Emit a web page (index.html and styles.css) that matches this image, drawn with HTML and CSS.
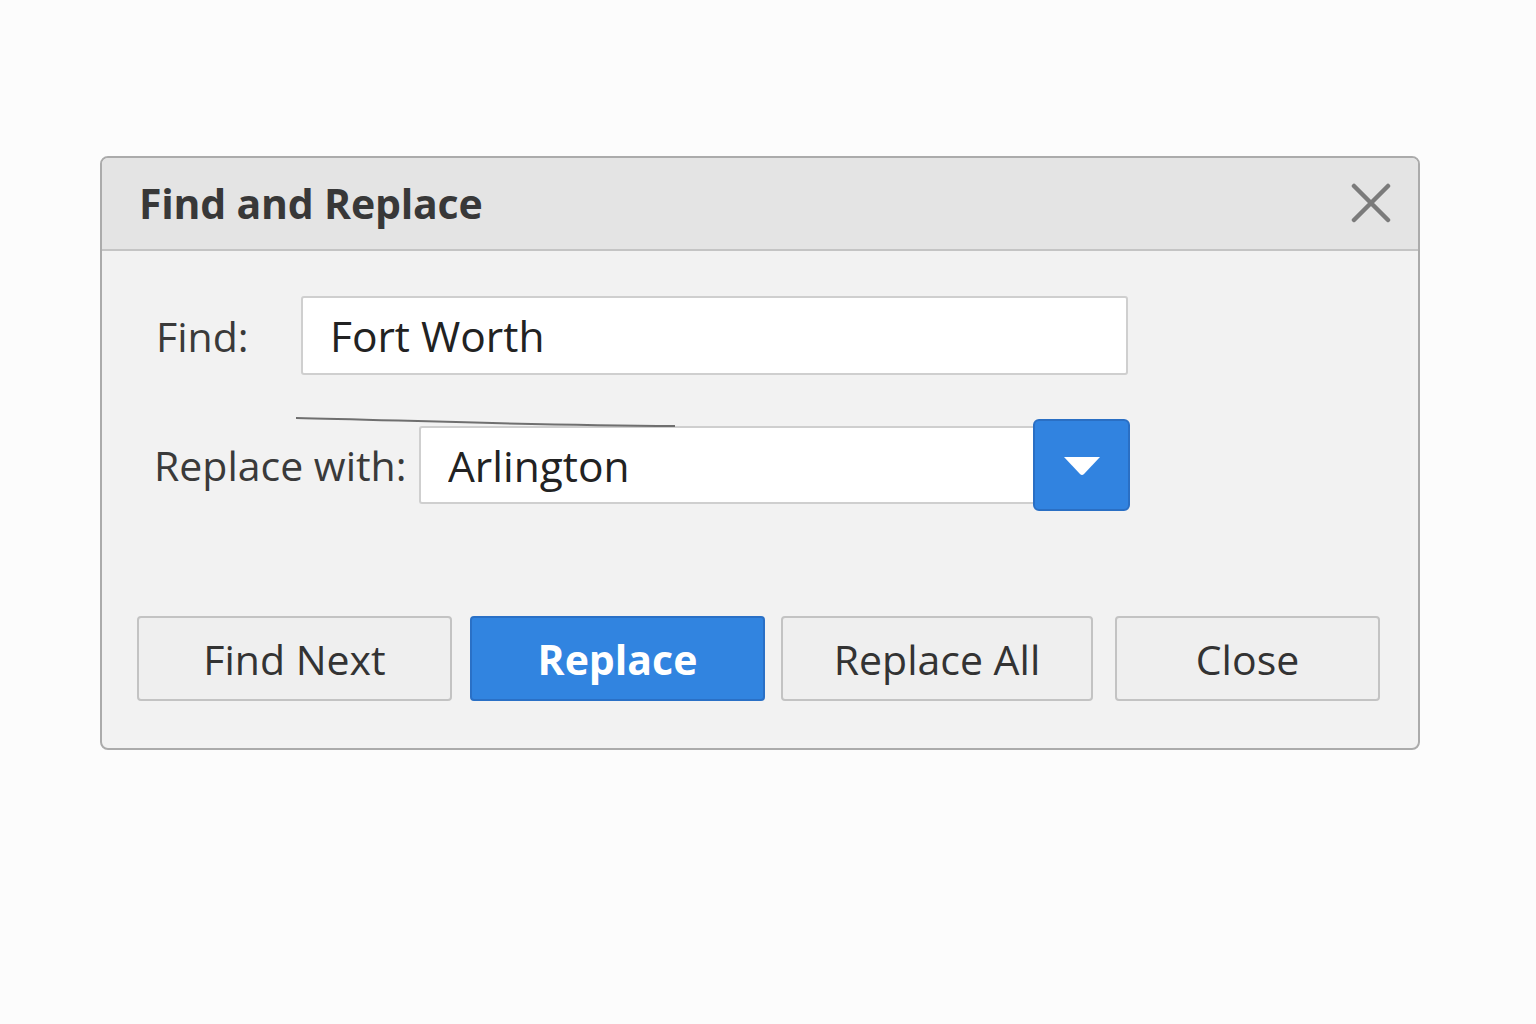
FILE: index.html
```html
<!DOCTYPE html>
<html lang="en">

<head>
    <meta charset="UTF-8">
    <meta name="viewport" content="width=device-width, initial-scale=1.0">
    <title>Find and Replace</title>
    <link rel="stylesheet" href="styles.css">
</head>

<body>
    <div class="dialog">
        <div class="dialog-header">
            <div class="dialog-title">Find and Replace</div>
            <button class="close-x" aria-label="Close">
                <svg width="40" height="40" viewBox="0 0 40 40">
                    <path d="M3 3 L37 37 M37 3 L3 37" stroke="#7b7b7b" stroke-width="4.5" stroke-linecap="round" fill="none"/>
                </svg>
            </button>
        </div>

        <div class="dialog-body">
            <!-- Find row -->
            <div class="row find-row">
                <label class="label find-label" for="findText">Find:</label>
                <input id="findText" class="text-input find-input" type="text" value="Fort Worth">
            </div>

            <!-- Replace row -->
            <div class="row replace-row">
                <svg class="stray-line" width="420" height="14" viewBox="0 0 420 14">
                    <path d="M1 2 C100 4, 220 9, 380 10" stroke="#6f6f6f" stroke-width="2" fill="none"/>
                </svg>
                <label class="label replace-label" for="replaceText">Replace with:</label>
                <input id="replaceText" class="text-input replace-input" type="text" value="Arlington">
                <button class="dropdown-btn" aria-label="Show history">
                    <svg width="40" height="22" viewBox="0 0 40 22">
                        <path d="M2 2 L38 2 L22 19 Q20 21 18 19 Z" fill="#ffffff"/>
                    </svg>
                </button>
            </div>

            <div class="button-group">
                <button class="btn btn-find-next">Find Next</button>
                <button class="btn btn-primary btn-replace">Replace</button>
                <button class="btn btn-replace-all">Replace All</button>
                <button class="btn btn-close">Close</button>
            </div>
        </div>
    </div>
</body>

</html>
```

FILE: styles.css
```css
* {
    box-sizing: border-box;
}

body {
    margin: 0;
    background-color: #fcfcfc;
    font-family: "Open Sans", "Noto Sans", sans-serif;
    color: #333333;
}

.dialog {
    width: 1320px;
    height: 594px;
    margin: 156px 0 0 100px;
    border: 2px solid #ababab;
    border-radius: 8px;
    background-color: #f2f2f2;
    overflow: hidden;
}

.dialog-header {
    height: 93px;
    display: flex;
    align-items: center;
    justify-content: space-between;
    padding: 0 27px 2px 37px;
    background-color: #e4e4e4;
    border-bottom: 2px solid #c4c4c4;
}

.dialog-title {
    font-size: 41px;
    font-weight: bold;
    color: #383838;
    letter-spacing: -0.2px;
}

.close-x {
    border: none;
    background: none;
    padding: 0;
    width: 40px;
    height: 40px;
    cursor: pointer;
}

.dialog-body {
    padding: 45px 0 0 35px;
}

.row {
    display: flex;
    align-items: center;
}

.label {
    font-size: 41px;
    color: #3a3a3a;
}

.find-label {
    width: 164px;
    padding-left: 19px;
}

.replace-label {
    width: 282px;
    padding-left: 17px;
    margin-top: 18px;
}

.text-input {
    height: 79px;
    border: 2px solid #cfcfcf;
    border-radius: 3px;
    background-color: #ffffff;
    font-family: inherit;
    font-size: 42.5px;
    color: #222222;
    outline: none;
}

.find-input {
    width: 827px;
    padding-left: 27px;
}

.replace-row {
    position: relative;
    margin-top: 44px;
    height: 91px;
    align-items: flex-start;
}

.stray-line {
    position: absolute;
    left: 158px;
    top: -3px;
}

.replace-input {
    width: 614px;
    height: 78px;
    margin-top: 7px;
    padding-left: 27px;
    border-right: none;
    border-radius: 3px 0 0 3px;
}

.dropdown-btn {
    width: 97px;
    height: 92px;
    border: 2px solid #2a6fc4;
    border-radius: 6px;
    background-color: #3183e0;
    display: flex;
    align-items: center;
    justify-content: center;
    padding: 2px 0 0 0;
    cursor: pointer;
}

.button-group {
    display: flex;
    margin-top: 106px;
}

.btn {
    height: 85px;
    border: 2px solid #c3c3c3;
    border-radius: 4px;
    background-color: #efefef;
    font-family: inherit;
    font-size: 41px;
    color: #333333;
    cursor: pointer;
    padding: 0;
}

.btn-find-next {
    width: 315px;
}

.btn-replace {
    width: 295px;
    margin-left: 18px;
}

.btn-replace-all {
    width: 312px;
    margin-left: 16px;
}

.btn-close {
    width: 265px;
    margin-left: 22px;
}

.btn-primary {
    background-color: #3184e0;
    border-color: #2a70c6;
    color: #ffffff;
    font-weight: bold;
}
```
